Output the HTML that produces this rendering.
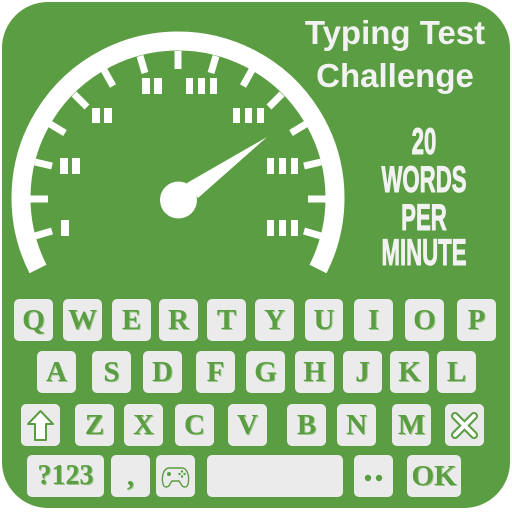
<!DOCTYPE html>
<html><head><style>
body{margin:0;width:512px;height:512px;background:#fff;overflow:hidden;position:relative;font-family:"Liberation Sans",sans-serif}
.bg{position:absolute;left:2px;top:2px;width:508px;height:506px;background:#5b9d43;border-radius:46px}
.k{position:absolute;background:#ebebeb;border-radius:5px;height:42px;color:#5b9d43;font-family:"Liberation Serif",serif;font-weight:bold;font-size:29px;line-height:42px;text-align:center;text-shadow:1px 1px 0 #9cc78a}
.t{position:absolute;color:#f2f2f2;font-weight:bold;text-align:center}
.n{position:absolute;color:#f2f2f2;font-weight:bold;font-size:37px;line-height:36px;width:200px;left:324px;text-align:center;transform:scaleX(.6);-webkit-text-stroke:1px #f2f2f2}
</style></head><body>
<div class="bg"></div>
<svg style="position:absolute;left:0;top:0" width="512" height="512">
<g fill="none" stroke="#fff">
<path d="M38 269 A157 157 0 1 1 318 269" stroke-width="19"/>
<g stroke-width="7">
<line x1="35" y1="236" x2="52" y2="231"/>
<line x1="30" y1="199" x2="48" y2="199"/>
<line x1="35" y1="162" x2="52" y2="166"/>
<line x1="50" y1="124" x2="65" y2="133"/>
<line x1="74" y1="94" x2="87" y2="107"/>
<line x1="104" y1="70" x2="113" y2="86"/>
<line x1="140" y1="56" x2="145" y2="73"/>
<line x1="178" y1="51" x2="178" y2="69"/>
<line x1="216" y1="56" x2="211" y2="73"/>
<line x1="252" y1="70" x2="243" y2="86"/>
<line x1="282" y1="94" x2="269" y2="107"/>
<line x1="306" y1="124" x2="291" y2="133"/>
<line x1="321" y1="162" x2="304" y2="166"/>
<line x1="326" y1="199" x2="308" y2="199"/>
<line x1="321" y1="236" x2="304" y2="231"/>
</g></g>
<g fill="#fff">
<rect x="61" y="220" width="8" height="16"/>
<rect x="60" y="158" width="8" height="16"/><rect x="72" y="158" width="8" height="16"/>
<rect x="92" y="108" width="8" height="15"/><rect x="104" y="108" width="8" height="15"/>
<rect x="142" y="78" width="8" height="16"/><rect x="154" y="78" width="8" height="16"/>
<rect x="186" y="78" width="7" height="16"/><rect x="198" y="78" width="7" height="16"/><rect x="210" y="78" width="7" height="16"/>
<rect x="233" y="108" width="7" height="15"/><rect x="245" y="108" width="7" height="15"/><rect x="257" y="108" width="7" height="15"/>
<rect x="267" y="158" width="7" height="16"/><rect x="279" y="158" width="7" height="16"/><rect x="291" y="158" width="7" height="16"/>
<rect x="267" y="220" width="7" height="16"/><rect x="279" y="220" width="7" height="16"/><rect x="291" y="220" width="7" height="16"/>
<circle cx="178.5" cy="200" r="18.5"/>
<polygon points="267,137 187,183 198,198"/>
</g>
</svg>
<div class="t" style="left:280px;top:14px;width:230px;font-size:33px;line-height:38px">Typing Test</div>
<div class="t" style="left:280px;top:57px;width:230px;font-size:33px;line-height:38px">Challenge</div>
<div class="n" style="top:124px">20</div>
<div class="n" style="top:162px">WORDS</div>
<div class="n" style="top:200px">PER</div>
<div class="n" style="top:235px">MINUTE</div>

<div class="k" style="top:299px;left:14px;width:39px">Q</div>
<div class="k" style="top:299px;left:63px;width:39px">W</div>
<div class="k" style="top:299px;left:112px;width:39px">E</div>
<div class="k" style="top:299px;left:159px;width:39px">R</div>
<div class="k" style="top:299px;left:207px;width:39px">T</div>
<div class="k" style="top:299px;left:255px;width:39px">Y</div>
<div class="k" style="top:299px;left:305px;width:38px">U</div>
<div class="k" style="top:299px;left:354px;width:39px">I</div>
<div class="k" style="top:299px;left:405px;width:39px">O</div>
<div class="k" style="top:299px;left:457px;width:39px">P</div>

<div class="k" style="top:351px;left:37px;width:39px">A</div>
<div class="k" style="top:351px;left:92px;width:39px">S</div>
<div class="k" style="top:351px;left:143px;width:39px">D</div>
<div class="k" style="top:351px;left:196px;width:39px">F</div>
<div class="k" style="top:351px;left:246px;width:39px">G</div>
<div class="k" style="top:351px;left:295px;width:39px">H</div>
<div class="k" style="top:351px;left:343px;width:39px">J</div>
<div class="k" style="top:351px;left:390px;width:39px">K</div>
<div class="k" style="top:351px;left:437px;width:39px">L</div>

<div class="k" style="top:404px;left:21px;width:39px"><svg width="39" height="42"><path d="M19.5 7 L32 20 L25 20 L25 36 L14 36 L14 20 L7 20 Z" fill="#fff" stroke="#5b9d43" stroke-width="2" stroke-linejoin="round"/></svg></div>
<div class="k" style="top:404px;left:75px;width:39px">Z</div>
<div class="k" style="top:404px;left:124px;width:39px">X</div>
<div class="k" style="top:404px;left:175px;width:39px">C</div>
<div class="k" style="top:404px;left:228px;width:39px">V</div>
<div class="k" style="top:404px;left:287px;width:39px">B</div>
<div class="k" style="top:404px;left:337px;width:39px">N</div>
<div class="k" style="top:404px;left:392px;width:39px">M</div>
<div class="k" style="top:404px;left:445px;width:39px"><svg width="39" height="42"><path d="M10 12 L29 31 M29 12 L10 31" stroke="#5b9d43" stroke-width="8" stroke-linecap="round"/><path d="M10 12 L29 31 M29 12 L10 31" stroke="#fff" stroke-width="4" stroke-linecap="round"/></svg></div>

<div class="k" style="top:455px;left:27px;width:77px;font-size:28px">?123</div>
<div class="k" style="top:455px;left:111px;width:39px">,</div>
<div class="k" style="top:455px;left:156px;width:39px"><svg width="39" height="42"><path d="M7 29 C5 21 8 13 13 13 L26 13 C31 13 34 21 32 29 C31 33 27 33 25 29 L23 26 L16 26 L14 29 C12 33 8 33 7 29 Z" fill="none" stroke="#5b9d43" stroke-width="1.4"/><circle cx="13" cy="19" r="2" fill="#5b9d43"/><circle cx="26" cy="16.5" r="1.2" fill="#5b9d43"/><circle cx="26" cy="21.5" r="1.2" fill="#5b9d43"/><circle cx="23.5" cy="19" r="1.2" fill="#5b9d43"/><circle cx="28.5" cy="19" r="1.2" fill="#5b9d43"/></svg></div>
<div class="k" style="top:455px;left:207px;width:136px"></div>
<div class="k" style="top:455px;left:354px;width:39px"><svg width="39" height="42"><circle cx="14" cy="23" r="3.2" fill="#5b9d43"/><circle cx="25" cy="23" r="3.2" fill="#5b9d43"/></svg></div>
<div class="k" style="top:455px;left:407px;width:54px">OK</div>
</body></html>
